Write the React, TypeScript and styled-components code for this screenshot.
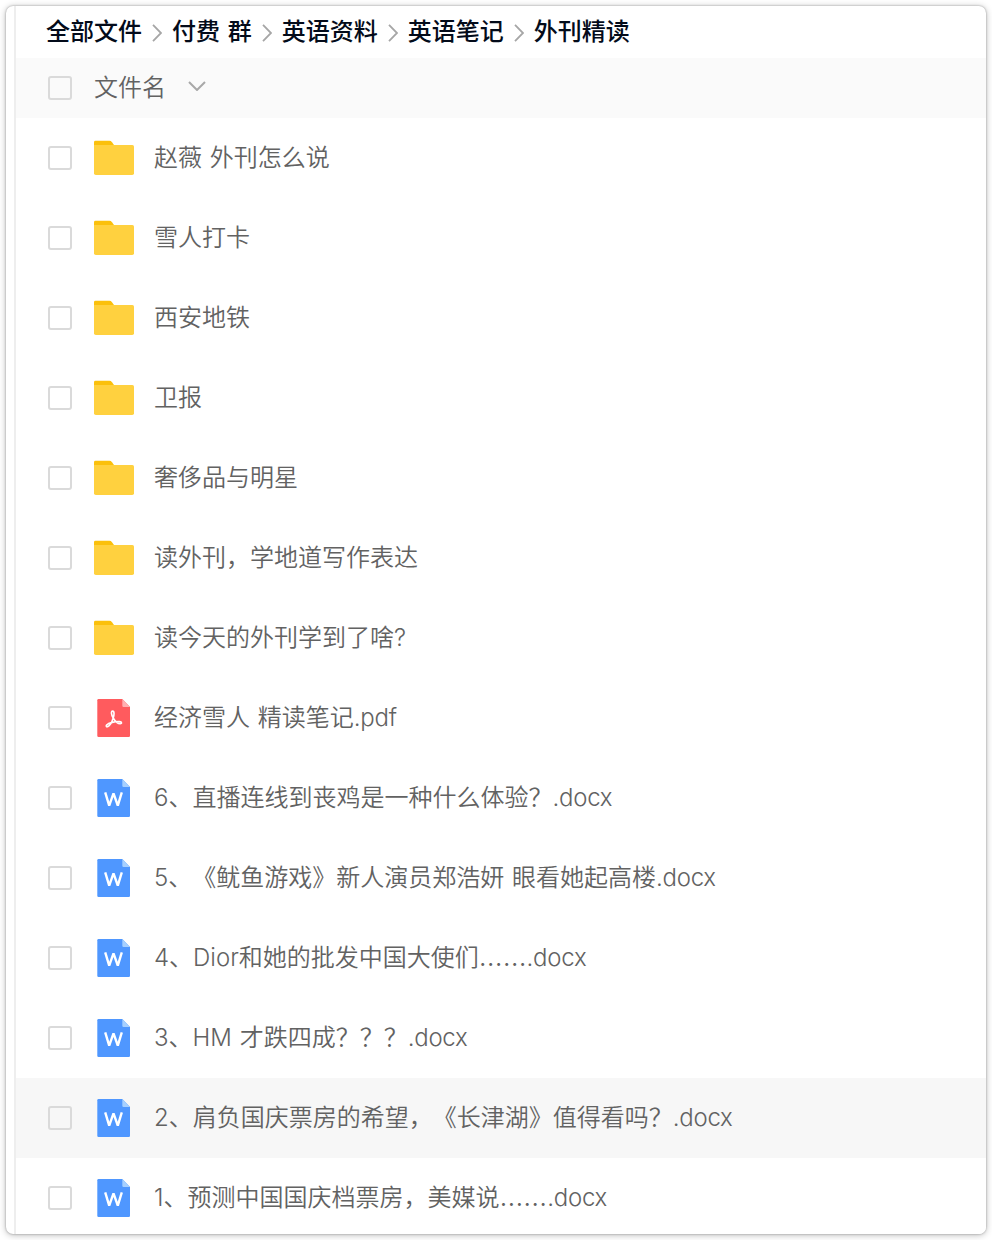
import React from "react";
import styled, { createGlobalStyle } from "styled-components";

const GlobalStyle = createGlobalStyle`
  * { box-sizing: border-box; }
  body { margin: 0; background: #fff; }
`;

const Page = styled.div`
  height: 1240px;
  padding: 6px;
  overflow: hidden;
  font-family: Inter, "Noto Sans CJK SC", sans-serif;
  font-size: 24px;
  line-height: 36px;
  color: #626262;
  text-spacing-trim: space-all;
`;

const Window = styled.div`
  width: 980px;
  height: 1228px;
  display: flex;
  padding-left: 8px;
  overflow: hidden;
  background: #fff;
  border-radius: 7px;
  box-shadow: 0 0 2px rgba(0, 0, 0, 0.36), 0 1px 7px rgba(0, 0, 0, 0.28);
`;

const Content = styled.main`
  flex: 1;
  min-width: 0;
  border-left: 2px solid #eeeeee;
`;

const Breadcrumbs = styled.nav`
  display: flex;
  align-items: center;
  height: 52px;
  padding-left: 30px;
  color: #030b1a;
  font-weight: 500;
`;

const Crumb = styled.span`
  white-space: pre;
  word-spacing: 1.3px;
`;

const CrumbArrow = styled.svg`
  width: 10px;
  height: 18px;
  margin: 2px 10px 0;
  flex: none;
`;

const HeaderRow = styled.div`
  display: flex;
  align-items: center;
  height: 60px;
  padding-left: 32px;
  background: #fafafa;
`;

const HeaderLabel = styled.span`
  margin-left: 22px;
  font-weight: 350;
`;

const SortArrow = styled.svg`
  width: 18px;
  height: 10px;
  margin: 0 0 4px 22px;
`;

const Row = styled.div<{ $active?: boolean }>`
  display: flex;
  align-items: center;
  height: 80px;
  padding-left: 32px;
  background: ${(p) => (p.$active ? "#f7f7f7" : "#fff")};
`;

const Checkbox = styled.span`
  width: 24px;
  height: 24px;
  flex: none;
  border: 2px solid #dadada;
  border-radius: 3px;
`;

const IconSlot = styled.span`
  display: flex;
  width: 40px;
  height: 40px;
  margin: 0 20px 0 22px;
  flex: none;
`;

const FileName = styled.span`
  white-space: pre;
  font-weight: 350;
  word-spacing: 1px;
`;

const Extension = styled.span`
  letter-spacing: -0.25px;
`;

const Ellipsis = styled.span`
  font-size: 28.2px;
  line-height: 24px;
`;

const FolderIcon = () => (
  <svg width="40" height="40" viewBox="0 0 40 40">
    <path d="M0 12V4.2Q0 2.8 1.4 2.8H15.5Q17 2.8 18 4.2L20 7V12Z" fill="#fbc00b" />
    <path d="M0 7H38.4Q40 7 40 8.6V35.2Q40 37 38.2 37H1.8Q0 37 0 35.2Z" fill="#ffd13f" />
  </svg>
);

const Sheet = ({ fill, fold, children }: { fill: string; fold: string; children: React.ReactNode }) => (
  <svg width="40" height="40" viewBox="0 0 40 40">
    <path d="M4.5 1H28.3L36 8.9V37.7Q36 39 34.7 39H4.5Q3.3 39 3.3 37.7V2.3Q3.3 1 4.5 1Z" fill={fill} />
    <path d="M28.3 1L36 8.9H29.5Q28.3 8.9 28.3 7.7Z" fill={fold} />
    {children}
  </svg>
);

const PdfIcon = () => (
  <Sheet fill="#ff5b5e" fold="#ffb0b1">
    <path
      d="M19.2 20C17.2 16.9 16.8 13.2 18.6 13.1C20.6 13.1 20.2 17 19.2 20C18.2 23.4 15.8 27.8 13.6 28.7C12.4 29.1 11.7 28 12.7 26.9C14.4 24.9 21.5 23.3 25.6 23.6C28.1 23.8 28 25.7 26.2 25.7C23.9 25.7 20.8 22.8 19.2 20Z"
      fill="none"
      stroke="#fff"
      strokeWidth="1.6"
      strokeLinejoin="round"
    />
  </Sheet>
);

const WordIcon = () => (
  <Sheet fill="#4f97ff" fold="#a6d0ff">
    <path
      d="M11.2 14.3L15.2 27.6L19.5 15.4L23.8 27.6L27.8 14.3"
      fill="none"
      stroke="#fff"
      strokeWidth="2.4"
      strokeLinejoin="bevel"
    />
  </Sheet>
);

const icons = { folder: FolderIcon, pdf: PdfIcon, word: WordIcon };

type FileEntry = { kind: keyof typeof icons; name: string; active?: boolean };

const path = ["全部文件", "付费 群", "英语资料", "英语笔记", "外刊精读"];

const files: FileEntry[] = [
  { kind: "folder", name: "赵薇 外刊怎么说" },
  { kind: "folder", name: "雪人打卡" },
  { kind: "folder", name: "西安地铁" },
  { kind: "folder", name: "卫报" },
  { kind: "folder", name: "奢侈品与明星" },
  { kind: "folder", name: "读外刊，学地道写作表达" },
  { kind: "folder", name: "读今天的外刊学到了啥?" },
  { kind: "pdf", name: "经济雪人 精读笔记.pdf" },
  { kind: "word", name: "6、直播连线到丧鸡是一种什么体验？.docx" },
  { kind: "word", name: "5、《鱿鱼游戏》新人演员郑浩妍 眼看她起高楼.docx" },
  { kind: "word", name: "4、Dior和她的批发中国大使们…….docx" },
  { kind: "word", name: "3、HM 才跌四成？？？.docx" },
  { kind: "word", name: "2、肩负国庆票房的希望，《长津湖》值得看吗？.docx", active: true },
  { kind: "word", name: "1、预测中国国庆档票房，美媒说…….docx" },
];

const Name = ({ text }: { text: string }) => (
  <FileName>
    {text.split(/(\.[a-z]+|…+)/).map((run, i) => {
      if (run.startsWith(".")) return <Extension key={i}>{run}</Extension>;
      if (run.startsWith("…")) return <Ellipsis key={i}>{run}</Ellipsis>;
      return run;
    })}
  </FileName>
);

export default function App() {
  return (
    <Page>
      <GlobalStyle />
      <Window>
        <Content>
          <Breadcrumbs>
            {path.map((part, i) => (
              <React.Fragment key={part}>
                {i > 0 && (
                  <CrumbArrow viewBox="0 0 10 18" fill="none" stroke="#a6a6a6" strokeWidth="1.8">
                    <path d="M1 0.8L9 9L1 17.2" />
                  </CrumbArrow>
                )}
                <Crumb>{part}</Crumb>
              </React.Fragment>
            ))}
          </Breadcrumbs>
          <HeaderRow>
            <Checkbox />
            <HeaderLabel>文件名</HeaderLabel>
            <SortArrow viewBox="0 0 18 10" fill="none" stroke="#a8a8a8" strokeWidth="2">
              <path d="M1 1L9 9L17 1" />
            </SortArrow>
          </HeaderRow>
          {files.map(({ kind, name, active }) => {
            const Icon = icons[kind];
            return (
              <Row key={name} $active={active}>
                <Checkbox />
                <IconSlot><Icon /></IconSlot>
                <Name text={name} />
              </Row>
            );
          })}
        </Content>
      </Window>
    </Page>
  );
}
